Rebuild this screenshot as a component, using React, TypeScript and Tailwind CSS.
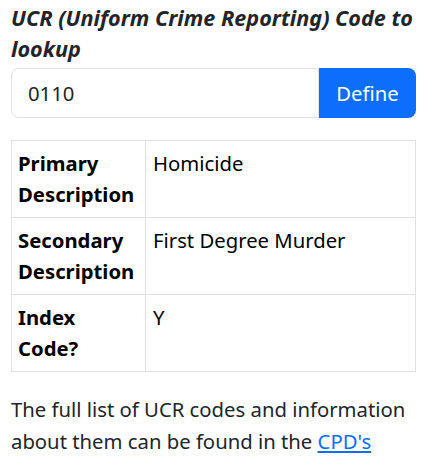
export default function App() {
  const rows: [string, string, string][] = [
    ["Primary", "Description", "Homicide"],
    ["Secondary", "Description", "First Degree Murder"],
    ["Index", "Code?", "Y"],
  ];
  return (
    <div
      className="px-[11px] pt-[1px] text-[#212529] bg-white min-h-[473px]"
      style={{ fontFamily: '"Noto Sans", "Open Sans", sans-serif' }}
    >
      <label className="block font-bold italic text-[21.6px] leading-[31px] pt-[1px]">
        UCR (Uniform Crime Reporting) Code to lookup
      </label>
      <div className="flex mt-[4px] h-[50px]">
        <input
          className="flex-1 min-w-0 border border-[#dee2e6] rounded-l-[8px] px-[16px] text-[20.3px] text-[#212529] outline-none"
          defaultValue="0110"
          style={{ fontFamily: '"Noto Sans", sans-serif' }}
        />
        <button className="w-[97px] bg-[#0d6efd] text-white rounded-r-[8px] text-[20.3px]">Define</button>
      </div>
      <table className="w-full mt-[22px] border-collapse text-[20.3px] leading-[31px] text-black">
        <tbody>
          {rows.map(([a, b, c]) => (
            <tr key={a}>
              <th className="w-[134px] text-left align-top font-bold border border-[#dee2e6] px-[6px] py-[7px]">
                {a}
                <br />
                {b}
              </th>
              <td className="align-top border border-[#dee2e6] px-[7px] py-[7px]">{c}</td>
            </tr>
          ))}
        </tbody>
      </table>
      <p className="mt-[22px] text-[20.3px] leading-[31.5px]">
        The full list of UCR codes and information about them can be found in the{" "}
        <a href="#" className="text-[#0d6efd] underline">
          CPD's
        </a>
      </p>
    </div>
  );
}
